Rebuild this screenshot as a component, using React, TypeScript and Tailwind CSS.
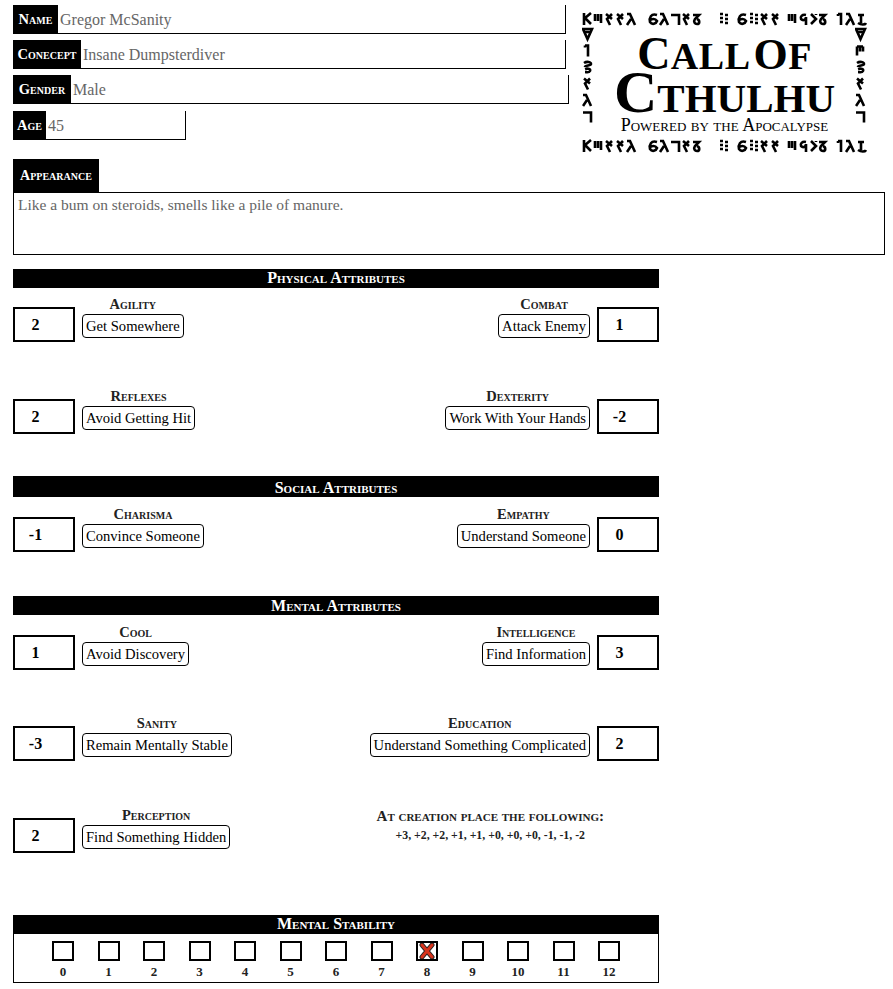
const GLYPHS: Record<string, string> = {
  a: "M2 1V13M9 1L3 6L9 12",
  b: "M2 2V9M5 2V9M8 2V11",
  c: "M2 2L8 7M8 2L3 7L6 13",
  d: "M1 2H4L9 13M5 7L1 13",
  e: "M9 3C3 1 1 6 2 10C4 13 8 12 9 9C7 6 4 7 2 8",
  f: "M1 3H9V13",
  g: "M2 2H5M2 6H5M2 10H5M7 3H10M7 7H10M7 11H10",
  h: "M2 3H8L4 7C2 10 4 12 6 12C9 12 9 8 6 7",
  i: "M8 3C4 2 2 5 3 7C5 9 8 8 8 5V13",
  j: "M2 3V12M5 3V8M8 3V8M2 3H8",
  k: "M2 3H8M5 3V11M2 11C5 13 9 13 10 11",
  v: "M1 2H10L5.5 12ZM3 5H8",
  s: "M2 3C5 1 9 2 9 4C9 6 3 5 3 7M3 9C6 8 9 9 8 11C7 13 4 12 3 12",
  t: "M3 2L8 7L3 12M8 2V3",
  u: "M3 2H6V13M3 2V4",
};

// Decorative border script of the logo, one horizontal band
function GlyphRow() {
  const items: [string, number][] = [
    ["a", 0], ["b", 11], ["c", 22], ["c", 33], ["d", 44],
    ["e", 66], ["d", 77], ["f", 88], ["c", 99], ["h", 109],
    ["g", 136],
    ["e", 155], ["g", 166], ["c", 177], ["c", 188],
    ["b", 205], ["i", 216], ["t", 226], ["h", 235],
    ["u", 253], ["d", 263], ["k", 274],
  ];
  return (
    <svg width="285" height="15" viewBox="0 0 285 15" fill="none" stroke="black" strokeWidth="2.6">
      {items.map(([g, x], i) => (
        <path key={i} d={GLYPHS[g]} transform={`translate(${x} 0)`} />
      ))}
    </svg>
  );
}

function GlyphColumn({ glyphs }: { glyphs: string[] }) {
  return (
    <svg width="12" height="112" viewBox="0 0 12 112" fill="none" stroke="black" strokeWidth="2.6">
      {glyphs.map((g, i) => (
        <path key={i} d={GLYPHS[g]} transform={`translate(0 ${i * 16.5})`} />
      ))}
    </svg>
  );
}

function Logo() {
  return (
    <div className="ml-[13px] mt-[12px] flex h-[142px] w-[285px] flex-col">
      <GlyphRow />
      <div className="flex flex-1 justify-between">
        <GlyphColumn glyphs={["v", "u", "s", "c", "d", "f"]} />
        <div className="flex flex-col items-center text-black">
          <div className="mt-[9px] h-[35px] text-[38px] leading-[35px] font-bold tracking-[0.5px] whitespace-nowrap">
            <span className="text-[46px]">C</span>ALL <span className="-ml-[5px] text-[44px]">O</span>F
          </div>
          <div className="h-[43px] text-[41px] leading-[43px] font-bold whitespace-nowrap">
            <span className="text-[60px] leading-[43px]">C</span>THULHU
          </div>
          <div className="mt-[2px] text-[18px] leading-[18px] whitespace-nowrap [font-variant-caps:small-caps]">
            Powered by the Apocalypse
          </div>
        </div>
        <GlyphColumn glyphs={["v", "j", "s", "c", "d", "f"]} />
      </div>
      <GlyphRow />
    </div>
  );
}

function Field({ label, value, width, labelWidth, mb }: { label: string; value: string; width: string; labelWidth: string; mb: string }) {
  return (
    <div className={`flex h-[29px] ${width} ${mb}`}>
      <div className={`flex shrink-0 items-center justify-center bg-black text-[14.5px] font-bold text-white [font-variant-caps:small-caps] ${labelWidth}`}>
        {label}
      </div>
      <div className="flex-1 border-r border-b border-black pl-[2px] text-[16px] leading-[30px] text-[#666666]">
        {value}
      </div>
    </div>
  );
}

function SectionHeader({ title, className }: { title: string; className: string }) {
  return (
    <div className={`flex items-center justify-center bg-black text-[16px] font-bold text-white [font-variant-caps:small-caps] ${className}`}>
      {title}
    </div>
  );
}

function Score({ value }: { value: string }) {
  return (
    <div className="flex h-[35px] w-[62px] items-center justify-center border-2 border-black pr-[17px] text-[16px] font-bold text-black">
      {value}
    </div>
  );
}

function Attr({ title, action, value, right }: { title: string; action: string; value: string; right?: boolean }) {
  const text = (
    <div className="-mt-[12px] flex flex-col items-center">
      <div className="h-[19px] text-[14.5px] leading-[19px] font-bold text-[#222222] [font-variant-caps:small-caps]">
        {title}
      </div>
      <div className="flex h-[24px] items-center rounded-[4px] border border-black px-[3px] pt-[2px] text-[14.6px] whitespace-nowrap text-black">
        {action}
      </div>
    </div>
  );
  return (
    <div className="flex gap-[7px]">
      {right ? text : <Score value={value} />}
      {right ? <Score value={value} /> : text}
    </div>
  );
}

function AttrRow({ className, children }: { className: string; children: React.ReactNode }) {
  return <div className={`flex h-[35px] justify-between ${className}`}>{children}</div>;
}

const STABILITY = ["0", "1", "2", "3", "4", "5", "6", "7", "8", "9", "10", "11", "12"];

export default function App() {
  return (
    <div className="h-[989px] w-[893px] overflow-hidden bg-white pl-[13px] [font-family:'Liberation_Serif',serif]">
      <div className="flex h-[159px]">
        <div className="w-[556px] pt-[5px]">
          <Field label="Name" value="Gregor McSanity" width="w-[553px]" labelWidth="w-[45px]" mb="mb-[6px]" />
          <Field label="Conecept" value="Insane Dumpsterdiver" width="w-[553px]" labelWidth="w-[68px]" mb="mb-[6px]" />
          <Field label="Gender" value="Male" width="w-[556px]" labelWidth="w-[58px]" mb="mb-[7px]" />
          <Field label="Age" value="45" width="w-[173px]" labelWidth="w-[33px]" mb="mb-0" />
        </div>
        <Logo />
      </div>

      <div className="flex h-[33px] w-[86px] items-center justify-center bg-black text-[14px] font-bold text-white [font-variant-caps:small-caps]">
        Appearance
      </div>
      <div className="h-[63px] w-[872px] border border-black px-[4px] text-[15.5px] leading-[24px] text-[#666666]">
        Like a bum on steroids, smells like a pile of manure.
      </div>

      <div className="w-[646px]">
        <SectionHeader title="Physical Attributes" className="mt-[14px] h-[19px] pb-[2px]" />
        <AttrRow className="mt-[19px]">
          <Attr title="Agility" action="Get Somewhere" value="2" />
          <Attr title="Combat" action="Attack Enemy" value="1" right />
        </AttrRow>
        <AttrRow className="mt-[57px]">
          <Attr title="Reflexes" action="Avoid Getting Hit" value="2" />
          <Attr title="Dexterity" action="Work With Your Hands" value="-2" right />
        </AttrRow>

        <SectionHeader title="Social Attributes" className="mt-[42px] h-[21px] pt-[3px]" />
        <AttrRow className="mt-[20px]">
          <Attr title="Charisma" action="Convince Someone" value="-1" />
          <Attr title="Empathy" action="Understand Someone" value="0" right />
        </AttrRow>

        <SectionHeader title="Mental Attributes" className="mt-[44px] h-[19px]" />
        <AttrRow className="mt-[20px]">
          <Attr title="Cool" action="Avoid Discovery" value="1" />
          <Attr title="Intelligence" action="Find Information" value="3" right />
        </AttrRow>
        <AttrRow className="mt-[56px]">
          <Attr title="Sanity" action="Remain Mentally Stable" value="-3" />
          <Attr title="Education" action="Understand Something Complicated" value="2" right />
        </AttrRow>
        <AttrRow className="mt-[57px]">
          <Attr title="Perception" action="Find Something Hidden" value="2" />
          <div className="-mt-[12px] mr-[55px] flex flex-col items-center font-bold text-[#222222]">
            <div className="h-[20px] text-[15px] leading-[20px] [font-variant-caps:small-caps]">
              At creation place the following:
            </div>
            <div className="text-[11.8px] leading-[18px]">+3, +2, +2, +1, +1, +0, +0, +0, -1, -1, -2</div>
          </div>
        </AttrRow>

        <SectionHeader title="Mental Stability" className="mt-[62px] h-[19px] pb-[2px]" />
        <div className="flex h-[49px] justify-center border-x border-b border-black pt-[7px]">
          {STABILITY.map((n) => (
            <div key={n} className="flex w-[45.5px] flex-col items-center">
              <div className="flex h-[20px] w-[22px] items-center justify-center border-2 border-black">
                {n === "8" && (
                  <svg width="16" height="16" viewBox="0 0 16 16" strokeLinecap="round">
                    <path d="M3 2L13 14M13 2L3 14" stroke="#222222" strokeWidth="5" />
                    <path d="M3 2L13 14M13 2L3 14" stroke="#d8341c" strokeWidth="3" />
                  </svg>
                )}
              </div>
              <div className="mt-[2px] text-[13px] leading-[18px] font-bold text-[#222222]">{n}</div>
            </div>
          ))}
        </div>
      </div>
    </div>
  );
}
